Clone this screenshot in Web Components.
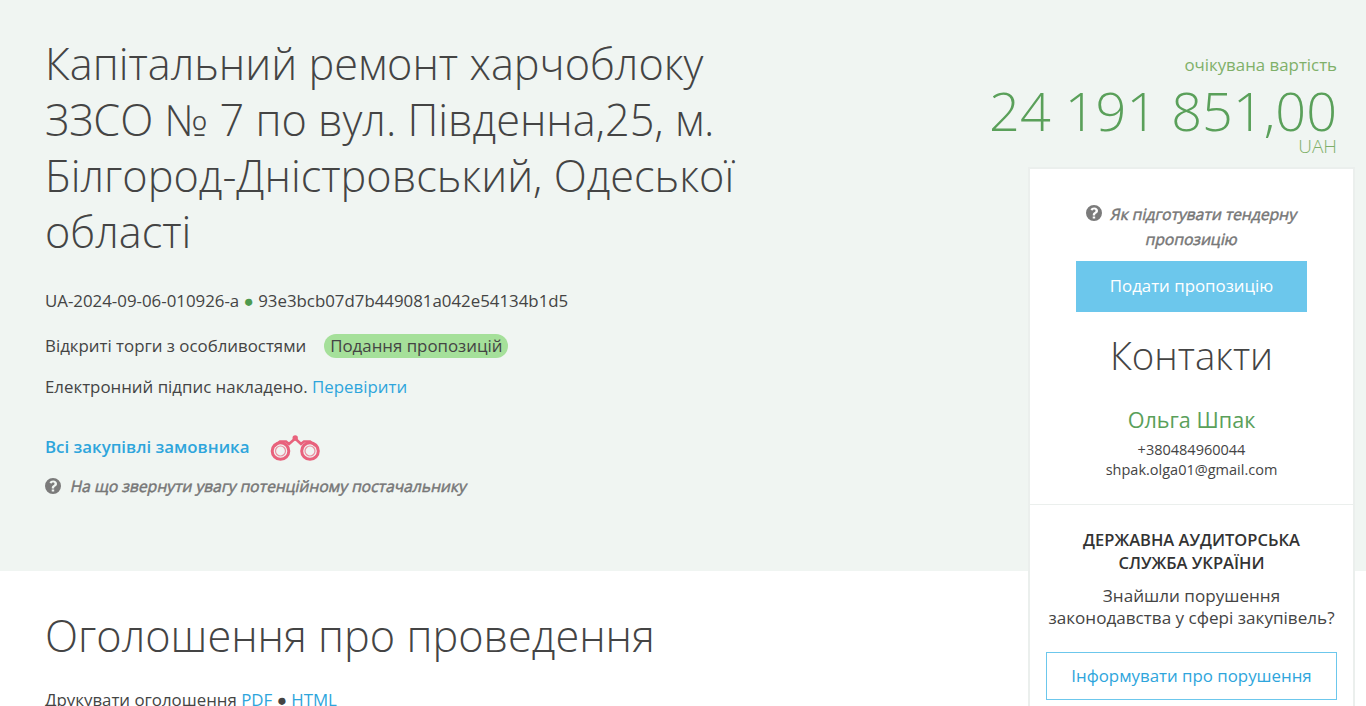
<!DOCTYPE html>
<html lang="uk">
<head>
<meta charset="utf-8">
<title>Оголошення</title>
<style>
  html, body { margin: 0; height: 706px; overflow: hidden; background: #fff; }
  body { font-family: "Open Sans", "Noto Sans", sans-serif; color: #444; }
</style>
</head>
<body>
<tender-page>
  <tender-hero slot="hero">
    <span slot="title">Капітальний ремонт харчоблоку ЗЗСО № 7 по вул. Південна,25, м. Білгород-Дністровський, Одеської області</span>
  </tender-hero>
  <price-box slot="hero-side" amount="24 191 851,00" currency="UAH"></price-box>
  <tender-notice slot="notice"></tender-notice>
  <side-card slot="card"></side-card>
</tender-page>

<script>
const QUESTION_ICON = `<svg viewBox="0 0 24 24" width="16" height="16" aria-hidden="true"><path fill="#7b7b7b" fill-rule="evenodd" d="M12 0a12 12 0 1 0 0 24 12 12 0 0 0 0-24zm-1.900 17.200h3.700v3.200h-3.700zM12.300 3.600c3.300 0 5.700 2 5.700 4.900 0 2.100-1.100 3.200-2.600 4.200-1.200.8-1.700 1.300-1.700 2.300v.6h-3.500v-.9c0-1.900.8-2.900 2.300-3.900 1.100-.8 1.800-1.300 1.800-2.300 0-1-.8-1.700-2-1.700-1.300 0-2.200.7-3 1.800L6.600 6.500c1.300-1.800 3-2.900 5.700-2.900z"/></svg>`;

// the italic hints in the reference are a slanted upright face, not the real italic
const SLANT_CSS = `
  .slant { display: inline-block; font-size: 15.650px; font-weight: 400; color: #777; -webkit-text-stroke: .5px #777; transform: skewX(-12deg); }
`;

class TenderPage extends HTMLElement {
  constructor() {
    super();
    this.attachShadow({ mode: 'open' }).innerHTML = `
    <style>
      :host { display: block; position: relative; }
      .hero {
        display: flex;
        justify-content: space-between;
        height: 571px;
        box-sizing: border-box;
        padding: 0 29px 0 45px;
        background: #f0f5f2;
      }
      .below { padding: 0 45px; }
      .card { position: absolute; top: 169px; left: 1030px; width: 323px; }
    </style>
    <div class="hero">
      <slot name="hero"></slot>
      <slot name="hero-side"></slot>
    </div>
    <div class="below"><slot name="notice"></slot></div>
    <div class="card"><slot name="card"></slot></div>
    `;
  }
}

class TenderHero extends HTMLElement {
  constructor() {
    super();
    this.attachShadow({ mode: 'open' }).innerHTML = `
    <style>
      :host { display: block; width: 720px; padding-top: 36px; }
      h1 { margin: 0 0 28px; font-size: 43.260px; line-height: 56.160px; font-weight: 300; color: #444; }
      .row { font-size: 16.850px; line-height: 24px; color: #444; }
      .ids { margin-bottom: 21px; }
      .dot { color: #4e9a4e; }
      .type { display: flex; align-items: center; gap: 18px; margin-bottom: 17px; }
      .badge { padding: 0 6px; line-height: 24px; border-radius: 12px; background: #a5e09a; }
      a { color: #2ea5dc; text-decoration: none; }
      .all { display: flex; align-items: center; gap: 21px; margin-top: 35px; font-weight: 600; }
      .all svg { display: block; margin-top: 1px; }
      .hint { display: flex; align-items: center; gap: 10px; margin-top: 13px; }
      ${SLANT_CSS}
    </style>
    <h1><slot name="title"></slot></h1>
    <div class="row ids">UA-2024-09-06-010926-a <span class="dot">●</span> 93e3bcb07d7b449081a042e54134b1d5</div>
    <div class="row type"><span>Відкриті торги з особливостями</span><span class="badge">Подання пропозицій</span></div>
    <div class="row">Електронний підпис накладено. <a href="#">Перевірити</a></div>
    <div class="row all">
      <a href="#">Всі закупівлі замовника</a>
      <svg width="50" height="26" viewBox="0 0 50 26" fill="none" stroke="#e8627c" aria-hidden="true">
        <circle cx="10.500" cy="16" r="8.300" stroke-width="3"/>
        <circle cx="10.500" cy="16" r="5" stroke-width="1.200" opacity=".7"/>
        <circle cx="40" cy="16" r="8.300" stroke-width="3"/>
        <circle cx="40" cy="16" r="5" stroke-width="1.200" opacity=".7"/>
        <path d="M4.500 11 L10 6.500 L16 6.500 L19 9 L25.200 3.500 L31 9 L34 6.500 L40 6.500 L46 11" stroke-width="2.600"/>
        <circle cx="25.200" cy="3" r="2.700" fill="#e8627c" stroke="none"/>
      </svg>
    </div>
    <div class="row hint">${QUESTION_ICON}<span class="slant">На що звернути увагу потенційному постачальнику</span></div>
    `;
  }
}

class PriceBox extends HTMLElement {
  constructor() {
    super();
    const amount = this.getAttribute('amount');
    const currency = this.getAttribute('currency');
    this.attachShadow({ mode: 'open' }).innerHTML = `
    <style>
      :host { display: block; text-align: right; padding-top: 53px; color: #5aa05a; }
      .label { font-size: 16.850px; line-height: 24px; color: #7fb069; }
      .amount { font-size: 54px; line-height: 60px; font-weight: 300; margin-top: 3px; }
      .cur { font-size: 19px; line-height: 20px; font-weight: 300; margin-top: -4px; color: #7fb069; }
    </style>
    <div class="label">очікувана вартість</div>
    <div class="amount">${amount}</div>
    <div class="cur">${currency}</div>
    `;
  }
}

class TenderNotice extends HTMLElement {
  constructor() {
    super();
    this.attachShadow({ mode: 'open' }).innerHTML = `
    <style>
      :host { display: block; padding-top: 36px; }
      h2 { margin: 0 0 23px; font-size: 43.260px; line-height: 58px; font-weight: 300; color: #444; }
      .row { font-size: 16.850px; line-height: 24px; color: #444; }
      a { color: #2ea5dc; text-decoration: none; }
    </style>
    <h2>Оголошення про проведення</h2>
    <div class="row">Друкувати оголошення <a href="#">PDF</a> ● <a href="#">HTML</a></div>
    `;
  }
}

class SideCard extends HTMLElement {
  constructor() {
    super();
    this.attachShadow({ mode: 'open' }).innerHTML = `
    <style>
      :host { display: block; background: #fff; box-shadow: 0 0 0 2px #ebefed; text-align: center; color: #444; height: 560px; }
      .top { padding: 33px 16px 24px; border-bottom: 1px solid #ebefed; }
      .how { line-height: 25px; }
      .how svg { vertical-align: -1px; margin-right: 5px; }
      .submit { display: block; width: 231px; height: 51px; line-height: 50px; margin: 9px auto 0; background: #6cc7ec; color: #fff; font-size: 16.850px; }
      h3 { margin: 16px 0 0; font-size: 38.400px; line-height: 54px; font-weight: 300; color: #444; }
      .name { margin-top: 23px; font-size: 21.600px; line-height: 30px; color: #5aa05a; }
      .line { font-size: 14.500px; line-height: 20px; }
      .name + .line { margin-top: 5px; }
      .audit { padding: 23px 16px; }
      h4 { margin: 0; font-size: 16.500px; line-height: 23px; font-weight: 600; color: #333; }
      .found { margin-top: 10.500px; font-size: 17.100px; line-height: 22.500px; }
      .report { display: block; box-sizing: border-box; height: 48px; line-height: 45px; margin-top: 22.500px; border: 1px solid #6cc7ec; color: #2ea5dc; font-size: 16.850px; }
      ${SLANT_CSS}
    </style>
    <div class="top">
      <div class="how">${QUESTION_ICON} <span class="slant">Як підготувати тендерну</span><br><span class="slant">пропозицію</span></div>
      <a class="submit">Подати пропозицію</a>
      <h3>Контакти</h3>
      <div class="name">Ольга Шпак</div>
      <div class="line">+380484960044</div>
      <div class="line">shpak.olga01@gmail.com</div>
    </div>
    <div class="audit">
      <h4>ДЕРЖАВНА АУДИТОРСЬКА<br>СЛУЖБА УКРАЇНИ</h4>
      <div class="found">Знайшли порушення законодавства у сфері закупівель?</div>
      <a class="report">Інформувати про порушення</a>
    </div>
    `;
  }
}

customElements.define('tender-page', TenderPage);
customElements.define('tender-hero', TenderHero);
customElements.define('price-box', PriceBox);
customElements.define('tender-notice', TenderNotice);
customElements.define('side-card', SideCard);
</script>
</body>
</html>
